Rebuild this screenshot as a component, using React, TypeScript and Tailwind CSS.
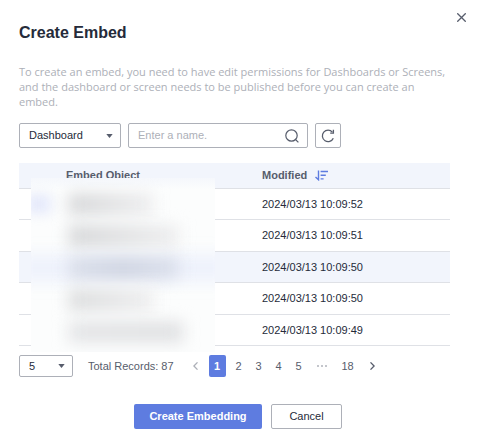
import type { ReactNode } from "react";

interface EmbedRow {
  id: number;
  modified: string;
  active?: boolean;
}

const rows: EmbedRow[] = [
  { id: 1, modified: "2024/03/13 10:09:52" },
  { id: 2, modified: "2024/03/13 10:09:51" },
  { id: 3, modified: "2024/03/13 10:09:50", active: true },
  { id: 4, modified: "2024/03/13 10:09:50" },
  { id: 5, modified: "2024/03/13 10:09:49" },
];

function SelectBox({ label, className, children }: { label: string; className: string; children: ReactNode }) {
  return (
    <div className={`relative shrink-0 ${className}`}>
      <select
        aria-label={label}
        className="block h-full w-full appearance-none rounded-xs border border-[#adb0b8] bg-white pr-5 pl-[9px] text-[11px] text-[#252b3a]"
      >
        {children}
      </select>
      <svg className="pointer-events-none absolute top-1/2 right-2 -translate-y-1/2" width="7" height="4" viewBox="0 0 7 4" aria-hidden="true">
        <path d="M0.3 0h6.4L3.5 4z" fill="#575d6c" />
      </svg>
    </div>
  );
}

function SortIcon() {
  return (
    <svg width="13" height="11" viewBox="0 0 13 11" fill="none" stroke="#5e7ce0" strokeWidth="1.4" aria-hidden="true">
      <path d="M3.5 0.5v9.2L0.5 6.9M5.6 1.5H13M5.6 5.2H10.8M5.6 8.9H8.6" />
    </svg>
  );
}

// Object names are redacted behind a frosted panel
function RedactedNames() {
  return (
    <div className="absolute top-[15px] left-3 h-[174px] w-[184px] overflow-hidden bg-[#fcfdfd]" aria-hidden="true">
      <div className="absolute inset-x-0 top-0 h-3 bg-linear-to-b from-[#f5f7fc] to-[#fcfdfd]" />
      <div className="absolute -inset-x-4 top-[76px] h-7 bg-[#eef2fc] blur-[8px]" />
      <div className="absolute top-4 -left-1 h-5 w-6 bg-[#e6eafb] blur-[6px]" />
      <div className="absolute top-4 left-[38px] h-5 w-[84px] bg-linear-to-r from-[#d2d3d5] to-[#ededee] blur-[8px]" />
      <div className="absolute top-12 left-[38px] h-5 w-[110px] bg-linear-to-r from-[#d2d3d5] to-[#ededee] blur-[8px]" />
      <div className="absolute top-20 left-[38px] h-5 w-[110px] bg-linear-to-r from-[#d8dde8] via-[#cdd2df] to-[#dadfeb] blur-[8px]" />
      <div className="absolute top-28 left-[38px] h-5 w-[84px] bg-linear-to-r from-[#d8d9da] to-[#ededee] blur-[8px]" />
      <div className="absolute top-36 left-[38px] h-5 w-[114px] bg-linear-to-r from-[#e2e3e5] to-[#dedfe1] blur-[8px]" />
    </div>
  );
}

export default function App() {
  return (
    <div
      role="dialog"
      aria-labelledby="embed-title"
      className="relative bg-white pt-[23px] pb-2.5 pl-[19px] font-['Liberation_Sans',Arial,sans-serif] text-[11px] text-[#252b3a]"
    >
      <button type="button" aria-label="Close" className="absolute top-3 right-3 p-px">
        <svg width="9" height="9" viewBox="0 0 9 9" fill="none" stroke="#575d6c" strokeWidth="1.3" aria-hidden="true">
          <path d="M0.3 0.3l8.4 8.4M8.7 0.3L0.3 8.7" />
        </svg>
      </button>

      <div className="pr-[29px]">
        <h1 id="embed-title" className="text-[16px] leading-5 font-bold">
          Create Embed
        </h1>
        <p className="mt-[21px] font-['Open_Sans','Noto_Sans',sans-serif] text-[11px] leading-[15px] text-[#adb0b8]">
          To create an embed, you need to have edit permissions for Dashboards or Screens, and the dashboard or screen needs to be published before you can create an embed.
        </p>

        <div className="mt-3.5 flex h-[25px] gap-[7px]">
          <SelectBox label="Object type" className="w-[102px]">
            <option>Dashboard</option>
            <option>Screen</option>
          </SelectBox>
          <div className="flex w-[180px] items-center rounded-xs border border-[#adb0b8] pr-2 pl-[9px]">
            <input
              type="text"
              aria-label="Name"
              placeholder="Enter a name."
              className="min-w-0 flex-1 outline-none placeholder:text-[#adb0b8]"
            />
            <button type="button" aria-label="Search">
              <svg width="14" height="14" viewBox="0 0 14 14" fill="none" stroke="#575d6c" strokeWidth="1.2" aria-hidden="true">
                <circle cx="6.5" cy="6.5" r="5.7" />
                <path d="M10 10l3.4 3.4" />
              </svg>
            </button>
          </div>
          <button type="button" aria-label="Refresh" className="flex w-[26px] items-center justify-center rounded-xs border border-[#adb0b8]">
            <svg width="14" height="14" viewBox="0 0 14 14" fill="none" stroke="#575d6c" strokeWidth="1.3" aria-hidden="true">
              <path d="M12.3 9.2A5.7 5.7 0 1 1 11.4 3.2" />
              <path d="M12.4 0.8v3.3H9.2" />
            </svg>
          </button>
        </div>

        <div className="relative mt-[15px]">
          <table className="w-full table-fixed border-separate border-spacing-0 text-left">
            <thead>
              <tr className="h-[26px] bg-[#f2f5fc] text-[#575d6c]">
                <th className="w-[47px] border-b border-[#dfe1e6] p-0" aria-label="Select" />
                <th className="w-[196px] border-b border-[#dfe1e6] p-0">Embed Object</th>
                <th className="border-b border-[#dfe1e6] p-0">
                  <button type="button" className="flex items-center gap-2 font-bold">
                    Modified
                    <SortIcon />
                  </button>
                </th>
              </tr>
            </thead>
            <tbody>
              {rows.map((row) => (
                <tr key={row.id} className={row.active ? "h-[31px] bg-[#f2f5fc]" : "h-[31px] even:h-8"}>
                  <td className="border-b border-[#dfe1e6] p-0" />
                  <td className="border-b border-[#dfe1e6] p-0" />
                  <td className="border-b border-[#dfe1e6] p-0">{row.modified}</td>
                </tr>
              ))}
            </tbody>
          </table>
          <RedactedNames />
        </div>

        <div className="mt-[9px] flex h-[22px] items-center text-[#575d6c]">
          <SelectBox label="Records per page" className="h-full w-[54px]">
            <option>5</option>
            <option>10</option>
          </SelectBox>
          <span className="ml-[15px] whitespace-nowrap">Total Records: 87</span>
          <nav aria-label="Pagination" className="ml-[13px] flex h-full items-center">
            <button type="button" aria-label="Previous page" className="flex w-[22px] justify-center pr-1">
              <svg width="5" height="8" viewBox="0 0 5 8" fill="none" stroke="#adb0b8" strokeWidth="1.3" aria-hidden="true">
                <path d="M4.5 0.4L0.9 4l3.6 3.6" />
              </svg>
            </button>
            <button type="button" aria-current="page" className="mr-[3px] h-full w-[17px] rounded-xs bg-[#5e7ce0] font-bold text-white">
              1
            </button>
            <button type="button" className="w-5">2</button>
            <button type="button" className="w-5">3</button>
            <button type="button" className="w-5">4</button>
            <button type="button" className="w-5">5</button>
            <svg className="mx-2" width="10" height="2" viewBox="0 0 10 2" fill="#8a8e99" aria-hidden="true">
              <path d="M0 0.5h2v1H0zM4 0.5h2v1H4zM8 0.5h2v1H8z" />
            </svg>
            <button type="button" className="w-[26px]">18</button>
            <button type="button" aria-label="Next page" className="flex w-6 justify-center">
              <svg width="5" height="8" viewBox="0 0 5 8" fill="none" stroke="#575d6c" strokeWidth="1.3" aria-hidden="true">
                <path d="M0.5 0.4L4.1 4L0.5 7.6" />
              </svg>
            </button>
          </nav>
        </div>
      </div>

      <div className="mt-[27px] flex justify-center gap-[9px] pr-[22px]">
        <button type="button" className="h-[25px] w-32 rounded-xs bg-[#5e7ce0] font-bold text-white">
          Create Embedding
        </button>
        <button type="button" className="h-[25px] w-[71px] rounded-xs border border-[#adb0b8]">
          Cancel
        </button>
      </div>
    </div>
  );
}
